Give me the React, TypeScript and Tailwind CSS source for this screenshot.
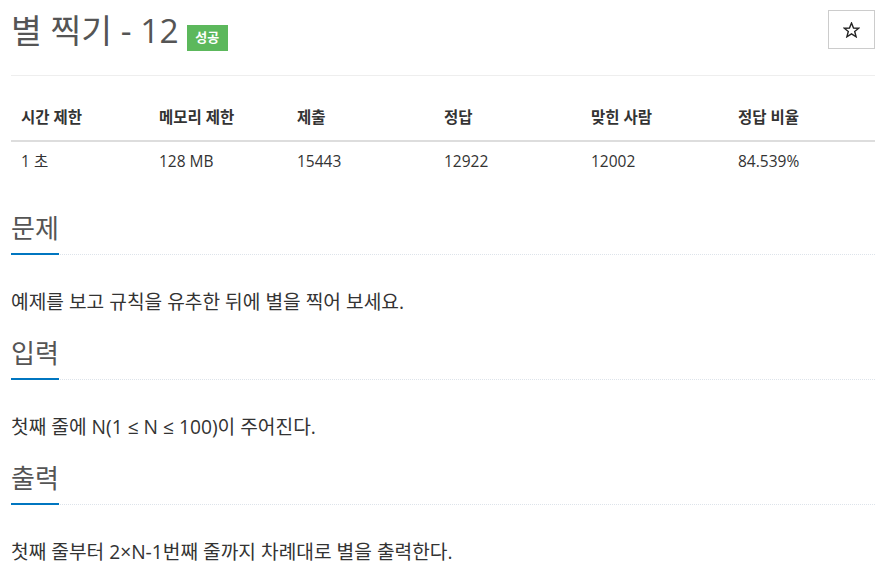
export default function App() {
  const stats = [
    { label: '시간 제한', value: '1 초', w: 'w-[138px]' },
    { label: '메모리 제한', value: '128 MB', w: 'w-[138px]' },
    { label: '제출', value: '15443', w: 'w-[147px]' },
    { label: '정답', value: '12922', w: 'w-[147px]' },
    { label: '맞힌 사람', value: '12002', w: 'w-[147px]' },
    { label: '정답 비율', value: '84.539%', w: 'w-[147px]' },
  ];

  const sections = [
    { title: '문제', body: '예제를 보고 규칙을 유추한 뒤에 별을 찍어 보세요.' },
    { title: '입력', body: '첫째 줄에 N(1 ≤ N ≤ 100)이 주어진다.' },
    { title: '출력', body: '첫째 줄부터 2×N-1번째 줄까지 차례대로 별을 출력한다.' },
  ];

  return (
    <div
      className="min-h-screen bg-white px-[11px] text-[#333]"
      style={{ fontFamily: '"Open Sans", "Noto Sans CJK KR", sans-serif' }}
    >
      <div className="w-[864px]">
        {/* Header */}
        <div className="h-[76px] border-b border-[#eee] pt-[10px] flex justify-between items-start">
          <div className="flex items-start">
            <h1 className="text-[33.5px] leading-[40px] font-normal text-[#555]">별 찍기 - 12</h1>
            <span className="ml-[8px] mt-[15px] w-[41px] h-[26px] bg-[#5cb85c] text-white text-[13px] font-bold flex items-center justify-center">
              성공
            </span>
          </div>
          <button className="w-[47px] h-[39px] border border-[#ccc] bg-white flex items-center justify-center">
            <svg width="17" height="16" viewBox="0 0 24 23" fill="none" stroke="#222" strokeWidth="2" strokeLinejoin="miter">
              <polygon points="12,1.5 14.9,8.6 22.5,8.9 16.6,13.7 18.6,21.2 12,17 5.4,21.2 7.4,13.7 1.5,8.9 9.1,8.6" />
            </svg>
          </button>
        </div>

        {/* Stats table */}
        <table className="mt-[19px] w-[864px] text-[15.5px] border-collapse">
          <thead>
            <tr className="border-b-2 border-[#ddd]">
              {stats.map((s) => (
                <th key={s.label} className={`${s.w} h-[46px] pl-[10px] text-left font-bold text-[#333]`}>
                  {s.label}
                </th>
              ))}
            </tr>
          </thead>
          <tbody>
            <tr>
              {stats.map((s) => (
                <td key={s.label} className="h-[40px] pl-[10px] text-left">
                  {s.value}
                </td>
              ))}
            </tr>
          </tbody>
        </table>

        {/* Sections */}
        {sections.map((sec, i) => (
          <section key={sec.title} className={i === 0 ? 'mt-[32px]' : 'mt-[21px]'}>
            <div className="border-b border-dotted border-[#dde3ea] h-[42px]">
              <h2 className="inline-block text-[26px] leading-[30px] pb-[10px] font-normal text-[#555] border-b-2 border-[#0076c0]">
                {sec.title}
              </h2>
            </div>
            <p className="mt-[32px] text-[19.2px] leading-[30px]">{sec.body}</p>
          </section>
        ))}
      </div>
    </div>
  );
}
